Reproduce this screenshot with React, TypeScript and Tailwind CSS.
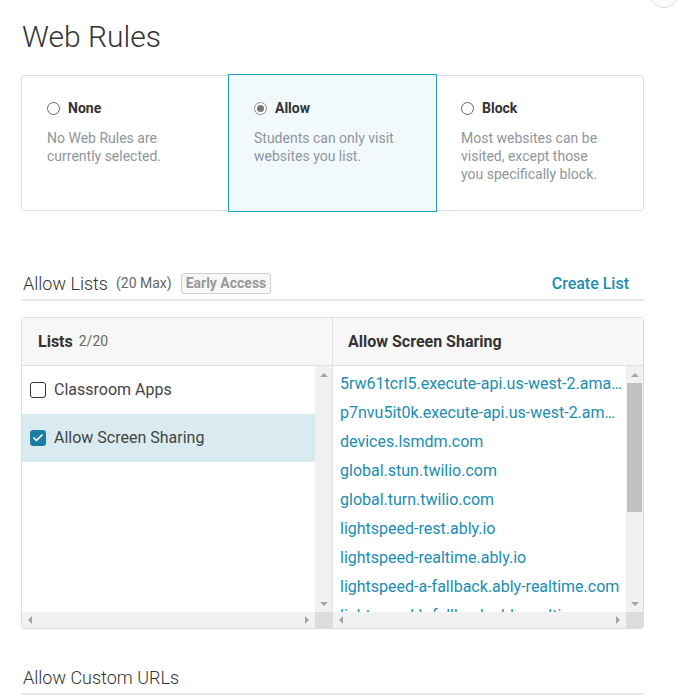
import { Check } from 'lucide-react';

type RuleOption = {
  id: string;
  label: string;
  description: string;
};

const ruleOptions: RuleOption[] = [
  { id: 'none', label: 'None', description: 'No Web Rules are currently selected.' },
  { id: 'allow', label: 'Allow', description: 'Students can only visit websites you list.' },
  {
    id: 'block',
    label: 'Block',
    description: 'Most websites can be visited, except those you specifically block.',
  },
];

const lists = [
  { id: 'classroom', name: 'Classroom Apps', checked: false },
  { id: 'screen', name: 'Allow Screen Sharing', checked: true },
];

const urls = [
  '5rw61tcrl5.execute-api.us-west-2.amazonaws.com',
  'p7nvu5it0k.execute-api.us-west-2.amazonaws.com',
  'devices.lsmdm.com',
  'global.stun.twilio.com',
  'global.turn.twilio.com',
  'lightspeed-rest.ably.io',
  'lightspeed-realtime.ably.io',
  'lightspeed-a-fallback.ably-realtime.com',
  'lightspeed-b-fallback.ably-realtime.com',
  'lightspeed-c-fallback.ably-realtime.com',
];

const Arrow = ({ dir }: { dir: 'up' | 'down' | 'left' | 'right' }) => {
  const points = {
    up: '0,4 4,0 8,4',
    down: '0,0 8,0 4,4',
    left: '4,0 4,8 0,4',
    right: '0,0 0,8 4,4',
  }[dir];
  const vertical = dir === 'up' || dir === 'down';
  return (
    <svg width={vertical ? 8 : 4} height={vertical ? 4 : 8} viewBox={vertical ? '0 0 8 4' : '0 0 4 8'}>
      <polygon points={points} fill="#a3a3a3" />
    </svg>
  );
};

const VScrollbar = ({ thumb }: { thumb?: boolean }) => (
  <div className="w-[17px] shrink-0 bg-[#f1f1f1] flex flex-col items-center">
    <div className="h-[17px] flex items-center justify-center">
      <Arrow dir="up" />
    </div>
    <div className="flex-1 w-full px-[1px]">
      {thumb && <div className="h-[129px] w-full bg-[#c1c1c1]" />}
    </div>
    <div className="h-[17px] flex items-center justify-center">
      <Arrow dir="down" />
    </div>
  </div>
);

const HScrollbar = () => (
  <div className="h-[16px] flex bg-[#f1f1f1]">
    <div className="flex-1 flex items-center justify-between px-[6px]">
      <Arrow dir="left" />
      <Arrow dir="right" />
    </div>
    <div className="w-[17px] bg-[#dcdcdc]" />
  </div>
);

const Radio = ({ selected }: { selected: boolean }) => (
  <span
    className={`w-[13px] h-[13px] rounded-full border flex items-center justify-center bg-white ${
      selected ? 'border-[#8a8a8a]' : 'border-[#666]'
    }`}
  >
    {selected && <span className="w-[7px] h-[7px] rounded-full bg-[#777]" />}
  </span>
);

const SectionHeading = ({ children }: { children: React.ReactNode }) => (
  <div className="h-[33px] flex items-center border-b-2 border-[#e9e9e9]">{children}</div>
);

export default function App() {
  const selectedRule = 'allow';

  return (
    <div
      className="relative w-[678px] h-[698px] overflow-hidden bg-white pl-[21px] pr-[34px] pt-[19px]"
      style={{ fontFamily: 'Roboto, "Noto Sans", sans-serif' }}
    >
      <div className="absolute left-[650px] top-[-20px] w-[28px] h-[28px] rounded-full border border-[#dcdcdc]" />

      <h1 className="text-[30px] leading-[36px] font-light text-[#333] pl-[1px]">Web Rules</h1>

      <div className="mt-[20px] grid grid-cols-3 border border-[#dedede] rounded-[3px] h-[136px]">
        {ruleOptions.map((opt) => {
          const selected = opt.id === selectedRule;
          return (
            <div
              key={opt.id}
              className={`pl-[25px] pr-[30px] pt-[22px] ${
                selected ? 'bg-[#f2f9fc] outline outline-1 outline-[#1ea0c9] -my-[1px] pt-[23px] relative' : ''
              }`}
            >
              <div className="flex items-center gap-[8px] h-[20px]">
                <Radio selected={selected} />
                <span className="text-[14px] font-bold text-[#333]">{opt.label}</span>
              </div>
              <p className="mt-[11px] text-[14px] leading-[18px] text-[#8f969b]">{opt.description}</p>
            </div>
          );
        })}
      </div>

      <div className="mt-[57px]">
        <SectionHeading>
          <span className="text-[18px] font-light text-[#333] pl-[2px]">Allow Lists</span>
          <span className="ml-[8px] text-[14px] text-[#666]">(20 Max)</span>
          <span className="ml-[9px] h-[21px] px-[4px] flex items-center border border-[#cfcfcf] rounded-[3px] bg-[#f7f7f7] text-[14px] font-bold text-[#999]">
            Early Access
          </span>
          <span className="ml-auto mr-[15px] text-[16px] font-medium text-[#1a8db3]">Create List</span>
        </SectionHeading>
      </div>

      <div className="mt-[16px] border border-[#dcdcdc] rounded-[3px] overflow-hidden">
        <div className="flex h-[48px] bg-[#f7f7f7] border-b border-[#e0e0e0]">
          <div className="w-[311px] border-r border-[#e0e0e0] flex items-center pl-[16px]">
            <span className="text-[16px] font-bold text-[#333]">Lists</span>
            <span className="ml-[6px] text-[14px] text-[#666]">2/20</span>
          </div>
          <div className="flex-1 flex items-center pl-[15px]">
            <span className="text-[16px] font-bold text-[#333]">Allow Screen Sharing</span>
          </div>
        </div>

        <div className="flex h-[262px]">
          <div className="w-[311px] border-r border-[#e0e0e0] flex flex-col">
            <div className="flex flex-1 min-h-0">
              <div className="flex-1">
                {lists.map((list) => (
                  <div
                    key={list.id}
                    className={`h-[48px] flex items-center pl-[8px] gap-[8px] ${list.checked ? 'bg-[#d9ebf1]' : ''}`}
                  >
                    {list.checked ? (
                      <span className="w-[16px] h-[16px] rounded-[3px] bg-[#1a7fa3] flex items-center justify-center">
                        <Check size={12} strokeWidth={3.5} color="white" />
                      </span>
                    ) : (
                      <span className="w-[16px] h-[16px] rounded-[3px] border-[1.5px] border-[#333] bg-white" />
                    )}
                    <span className="text-[16px] text-[#444]">{list.name}</span>
                  </div>
                ))}
              </div>
              <VScrollbar />
            </div>
            <HScrollbar />
          </div>

          <div className="flex-1 flex flex-col min-w-0">
            <div className="flex flex-1 min-h-0">
              <ul className="flex-1 min-w-0 overflow-hidden pt-[3px] pl-[7px] pr-[3px]">
                {urls.map((url) => (
                  <li key={url} className="h-[29px] leading-[29px] text-[16px] text-[#1a8db3] truncate">
                    {url}
                  </li>
                ))}
              </ul>
              <VScrollbar thumb />
            </div>
            <HScrollbar />
          </div>
        </div>
      </div>

      <div className="mt-[33px]">
        <SectionHeading>
          <span className="text-[18px] font-light text-[#333] pl-[2px]">Allow Custom URLs</span>
        </SectionHeading>
      </div>
    </div>
  );
}
